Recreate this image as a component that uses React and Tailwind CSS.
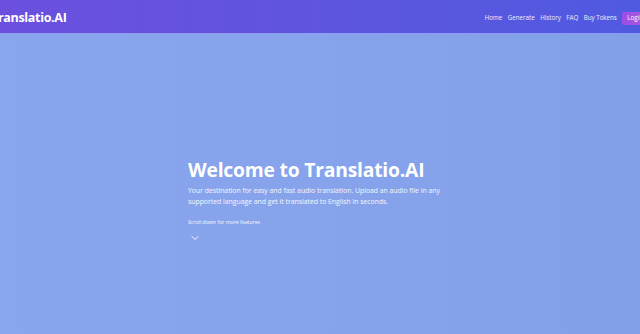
import { ChevronDown } from "lucide-react";

const NAV_LINKS = ["Home", "Generate", "History", "FAQ", "Buy Tokens"];

export default function App() {
  return (
    <div
      className="w-[640px] h-[334px] overflow-hidden bg-[#88a2eb] flex flex-col"
      style={{ fontFamily: '"Open Sans", "Noto Sans", sans-serif' }}
    >
      {/* Navbar */}
      <header className="h-[34px] shrink-0 pt-[3px] flex items-center justify-between bg-gradient-to-r from-[#6c4fdf] to-[#4f5ae0] border-b border-[#8e9bf0]">
        <span className="-ml-[9px] text-white font-bold text-[12.5px] tracking-tight">
          Translatio.AI
        </span>
        <nav className="flex items-center gap-[5.5px] -mr-[8px] text-[6.2px] text-white/90">
          {NAV_LINKS.map((l) => (
            <a key={l} href="#" className="leading-none">
              {l}
            </a>
          ))}
          <button className="h-[13px] px-[5px] rounded-[2px] bg-gradient-to-r from-[#9a4fe6] to-[#b255e2] text-white text-[6.2px] leading-none">
            Login
          </button>
        </nav>
      </header>

      {/* Hero */}
      <main className="flex-1 flex justify-center bg-gradient-to-r from-[#89a5ed] to-[#82a0e8]">
        <div className="w-[264px] pt-[123px] text-white">
          <h1 className="text-[19.3px] leading-[26px] font-bold tracking-[-0.2px]">
            Welcome to Translatio.AI
          </h1>
          <p className="mt-[2px] text-[6.85px] leading-[11px] text-white/90">
            Your destination for easy and fast audio translation. Upload an audio file in any
            supported language and get it translated to English in seconds.
          </p>
          <p className="mt-[12px] text-[5.2px] leading-[7px] text-white/90">
            Scroll down for more features
          </p>
          <ChevronDown className="mt-[6px] ml-[1px] w-[12px] h-[12px] text-white/90" strokeWidth={2} />
        </div>
      </main>
    </div>
  );
}
